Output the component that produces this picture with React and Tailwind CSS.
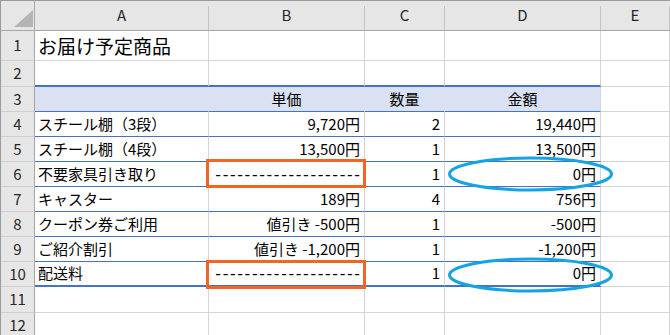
import React from "react";

// Sheet geometry: row header column + columns A–E
const COLS = ["A", "B", "C", "D", "E"];
const COL_W = ["w-[174px]", "w-[156px]", "w-[80px]", "w-[156px]", "flex-1"];

// Row content: [A, B, C, D]
const DATA = {
  4: ["スチール棚（3段）", "9,720円", "2", "19,440円"],
  5: ["スチール棚（4段）", "13,500円", "1", "13,500円"],
  6: ["不要家具引き取り", "dash", "1", "0円"],
  7: ["キャスター", "189円", "4", "756円"],
  8: ["クーポン券ご利用", "値引き -500円", "1", "-500円"],
  9: ["ご紹介割引", "値引き -1,200円", "1", "-1,200円"],
  10: ["配送料", "dash", "1", "0円"],
};

const ROW_H = {
  1: "h-[30px]",
  2: "h-[26px]",
  3: "h-[25px]",
  4: "h-[25px]",
  5: "h-[25px]",
  6: "h-[25px]",
  7: "h-[25px]",
  8: "h-[25px]",
  9: "h-[25px]",
  10: "h-[25px]",
  11: "h-[26px]",
  12: "h-[25px]",
};

function cellBorder(row, col) {
  const inTable = col < 4;
  if (!inTable) return "border-r border-b border-[#d4d4d4]";
  if (row === 2) return "border-r border-b-2 border-r-[#d4d4d4] border-b-[#4472c4]";
  if (row === 3)
    return col === 3
      ? "border-r border-b bg-[#d9e1f2] border-r-[#d4d4d4] border-b-[#4472c4]"
      : "border-r border-b bg-[#d9e1f2] border-r-[#d9e1f2] border-b-[#4472c4]";
  if (row >= 4 && row <= 9) return "border-r border-b border-r-[#d4d4d4] border-b-[#4472c4]";
  if (row === 10) return "border-r border-b-2 border-r-[#d4d4d4] border-b-[#4472c4]";
  return "border-r border-b border-[#d4d4d4]";
}

function Dashes() {
  return (
    <span className="mr-[-1.6px] font-['Liberation_Sans',sans-serif] text-[17px] leading-none tracking-[1.65px]">
      --------------------
    </span>
  );
}

function Cell({ row, col }) {
  let content = null;
  let align = "justify-start pl-[3px]";
  if (row === 1 && col === 0) {
    content = <span className="text-[19px] leading-none">お届け予定商品</span>;
  } else if (row === 3 && col >= 1 && col <= 3) {
    content = ["単価", "数量", "金額"][col - 1];
    align = "justify-center";
  } else if (DATA[row] && col < 4) {
    const v = DATA[row][col];
    if (col > 0) align = "justify-end pr-[4px]";
    content = v === "dash" ? <Dashes /> : v;
  }
  return (
    <div className={`flex items-center ${COL_W[col]} ${cellBorder(row, col)} ${align} whitespace-nowrap`}>
      {content}
    </div>
  );
}

function ColHeader({ label, w }) {
  return (
    <div className={`flex h-full ${w} border-b border-[#a6a6a6]`}>
      <div className="flex flex-1 items-center justify-center">{label}</div>
      <div className="mt-[5px] w-px bg-[#c4c4c4]" />
    </div>
  );
}

export default function App() {
  const rows = [1, 2, 3, 4, 5, 6, 7, 8, 9, 10, 11, 12];
  return (
    <div className="relative h-[335px] w-[670px] overflow-hidden border-l border-t border-[#9a9a9a] bg-white font-['Noto_Sans_CJK_JP',sans-serif] text-[15px] text-black">
      {/* column header row */}
      <div className="flex h-[30px] bg-[#e6e6e6] text-[#262626]">
        <div className="flex w-[34px] border-b border-r border-[#a6a6a6]">
          <svg width="33" height="29" viewBox="0 0 33 29">
            <polygon points="13,26 32,26 32,9" fill="#b4b4b4" />
          </svg>
        </div>
        {COLS.map((c, i) => (
          <ColHeader key={c} label={c} w={COL_W[i]} />
        ))}
      </div>

      {rows.map((r) => (
        <div key={r} className={`flex ${ROW_H[r]}`}>
          <div className="flex w-[34px] items-center justify-center border-b border-r border-b-[#cfcfcf] border-r-[#a6a6a6] bg-[#e6e6e6] text-[#262626]">
            {r}
          </div>
          {COLS.map((c, i) => (
            <Cell key={c} row={r} col={i} />
          ))}
        </div>
      ))}

      {/* annotation marks drawn over the sheet */}
      <svg className="pointer-events-none absolute left-[-1px] top-[-1px]" width="670" height="335" viewBox="0 0 670 335">
        <rect x="207.5" y="160.5" width="157" height="26" fill="none" stroke="#f26522" strokeWidth="3" />
        <rect x="207.5" y="261.5" width="157" height="26" fill="none" stroke="#f26522" strokeWidth="3" />
        <ellipse cx="530.5" cy="174" rx="81" ry="16" fill="none" stroke="#16a3e3" strokeWidth="3" />
        <ellipse cx="530.5" cy="275" rx="81" ry="16" fill="none" stroke="#16a3e3" strokeWidth="3" />
      </svg>
    </div>
  );
}
